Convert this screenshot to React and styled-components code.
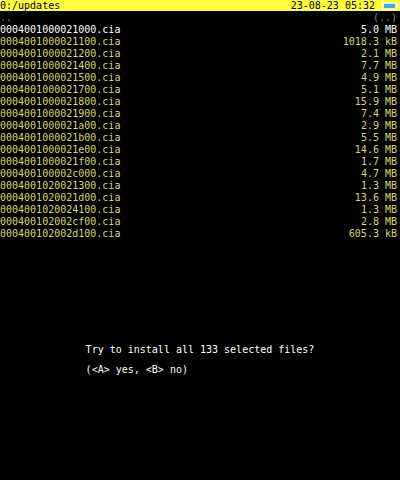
import React from "react";
import styled, { createGlobalStyle } from "styled-components";

const Global = createGlobalStyle`
  html, body { margin: 0; padding: 0; background: #000; }
  body { width: 400px; height: 480px; overflow: hidden; }
`;

const Screen = styled.div`
  width: 400px;
  height: 480px;
  background: #000;
  font-family: "DejaVu Sans Mono", "Liberation Mono", monospace;
  font-size: 10px;
  display: flex;
  flex-direction: column;
`;

const TopHalf = styled.div`
  height: 240px;
  display: flex;
  flex-direction: column;
`;

const Header = styled.div`
  height: 11px;
  box-sizing: border-box;
  padding: 1px 2px 0 0;
  line-height: 10px;
  background: #ffff40;
  color: #000;
  display: flex;
  justify-content: space-between;
  align-items: flex-start;
  white-space: pre;
`;

const HeaderRight = styled.div`
  display: flex;
  align-items: flex-start;
  gap: 7px;
`;

const Battery = styled.svg`
  display: block;
  margin-top: 1px;
`;

const List = styled.div`
  margin-top: 1px;
  display: flex;
  flex-direction: column;
`;

const Row = styled.div`
  height: 12px;
  line-height: 12px;
  display: flex;
  justify-content: space-between;
  padding: 0 3px 0 0;
  white-space: pre;
  color: ${(p) => p.$color};
`;

const BottomHalf = styled.div`
  height: 240px;
  display: flex;
  align-items: center;
  justify-content: center;
`;

const Prompt = styled.div`
  color: #fff;
  line-height: 10px;
  white-space: pre;
`;

const PromptLine = styled.div`
  height: 10px;
`;

const files = [
  ["0004001000021000.cia", "5.0 MB"],
  ["0004001000021100.cia", "1018.3 kB"],
  ["0004001000021200.cia", "2.1 MB"],
  ["0004001000021400.cia", "7.7 MB"],
  ["0004001000021500.cia", "4.9 MB"],
  ["0004001000021700.cia", "5.1 MB"],
  ["0004001000021800.cia", "15.9 MB"],
  ["0004001000021900.cia", "7.4 MB"],
  ["0004001000021a00.cia", "2.9 MB"],
  ["0004001000021b00.cia", "5.5 MB"],
  ["0004001000021e00.cia", "14.6 MB"],
  ["0004001000021f00.cia", "1.7 MB"],
  ["000400100002c000.cia", "4.7 MB"],
  ["0004001020021300.cia", "1.3 MB"],
  ["0004001020021d00.cia", "13.6 MB"],
  ["0004001020024100.cia", "1.3 MB"],
  ["000400102002cf00.cia", "2.8 MB"],
  ["000400102002d100.cia", "605.3 kB"],
];

export default function App() {
  return (
    <>
      <Global />
      <Screen>
        <TopHalf>
          <Header>
            <span>0:/updates</span>
            <HeaderRight>
              <span>23-08-23 05:32</span>
              <Battery width="16" height="8" viewBox="0 0 16 8">
                <rect x="0.5" y="0.5" width="14" height="7" fill="none" stroke="#fff" />
                <rect x="2" y="2" width="11" height="4" fill="#3fa6f0" />
                <rect x="15" y="2" width="1" height="4" fill="#fff" />
              </Battery>
            </HeaderRight>
          </Header>
          <List>
            <Row $color="#808080">
              <span>..</span>
              <span>(..)</span>
            </Row>
            {files.map(([name, size], i) => (
              <Row key={name} $color={i === 0 ? "#ffffff" : "#d8d868"}>
                <span>{name}</span>
                <span>{size}</span>
              </Row>
            ))}
          </List>
        </TopHalf>
        <BottomHalf>
          <Prompt>
            <PromptLine>Try to install all 133 selected files?</PromptLine>
            <PromptLine> </PromptLine>
            <PromptLine>{"(<A> yes, <B> no)"}</PromptLine>
          </Prompt>
        </BottomHalf>
      </Screen>
    </>
  );
}
